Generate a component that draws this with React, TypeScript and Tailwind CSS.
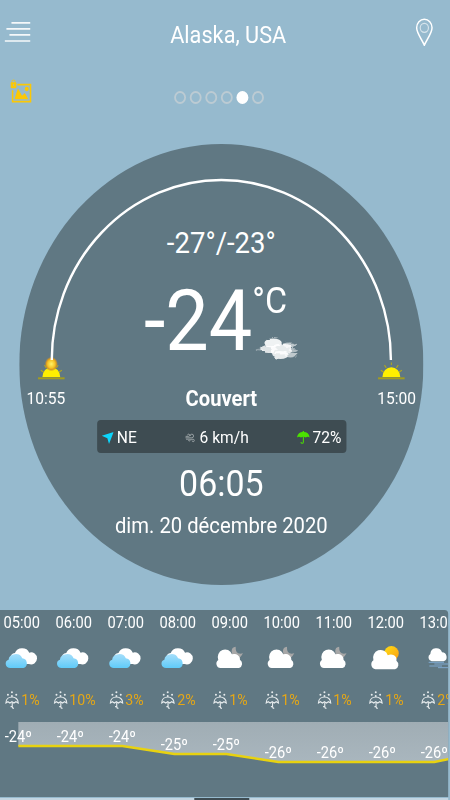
import React from 'react';

type Sky = 'cloudy' | 'night' | 'day' | 'fog';

interface Hour {
  time: string;
  sky: Sky;
  rain: string;
  temp: number;
}

const hours: Hour[] = [
  { time: '05:00', sky: 'cloudy', rain: '1%', temp: -24 },
  { time: '06:00', sky: 'cloudy', rain: '10%', temp: -24 },
  { time: '07:00', sky: 'cloudy', rain: '3%', temp: -24 },
  { time: '08:00', sky: 'cloudy', rain: '2%', temp: -25 },
  { time: '09:00', sky: 'night', rain: '1%', temp: -25 },
  { time: '10:00', sky: 'night', rain: '1%', temp: -26 },
  { time: '11:00', sky: 'night', rain: '1%', temp: -26 },
  { time: '12:00', sky: 'day', rain: '1%', temp: -26 },
  { time: '13:00', sky: 'fog', rain: '2%', temp: -26 },
];

const COLUMN = 56.75;

// y of the curve inside the chart area
const curveY = (temp: number) => 24 + (-24 - temp) * 8;

function MenuIcon() {
  return (
    <svg className="h-[22px] w-[29px]" viewBox="0 0 29 22" stroke="#fff" strokeWidth="1.7">
      <path d="M7.5 1.8H28M2 7.8H28M5.3 13.8H28M0 20H28" opacity=".9" />
    </svg>
  );
}

function PinIcon() {
  return (
    <svg className="h-7 w-5" viewBox="0 0 20 28" fill="none" stroke="#fff">
      <path d="M10 27.3C8.5 23 1.6 15.5 1.6 9.8a8.4 8.6 0 0 1 16.8 0C18.4 15.5 11.5 23 10 27.3Z" strokeWidth="1.6" />
      <circle cx="10" cy="9.8" r="4.5" strokeWidth="1.3" opacity=".6" />
    </svg>
  );
}

function GalleryIcon() {
  return (
    <svg className="h-6 w-6" viewBox="28 238 70 72" preserveAspectRatio="none" fill="#fbc806">
      <path d="M51 255H93V306H36V272" fill="none" stroke="#fbc806" strokeWidth="5" />
      <path d="M42 299 53 266 66 288 75 280 86 299Z" />
      <circle cx="81" cy="268" r="6.5" />
      <rect x="30" y="248" width="18" height="18" rx="3" />
      <path d="M34 249V246a5 5 0 0 1 10 0V249" fill="none" stroke="#fbc806" strokeWidth="2.5" />
      <circle cx="39" cy="256" r="2" fill="#96bace" />
    </svg>
  );
}

function SunIcon({ glow }: { glow?: boolean }) {
  return (
    <svg className="h-[22px] w-[30px] overflow-visible" viewBox="0 0 30 22">
      <path d="M3.5 12.2 6.5 14M7.5 7.2 9.5 9.8M15 4.5V7M22.5 7.2 20.5 9.8M26.5 12.2 23.5 14" stroke="#b5a91c" strokeWidth="1.1" />
      <path d="M5.3 19a9.7 9.8 0 0 1 19.4 0Z" fill="#ffef00" />
      <path d="M.5 20.3H29.5" stroke="#a39d20" strokeWidth="2" />
      {glow && (
        <>
          <defs>
            <radialGradient id="glow">
              <stop offset="0" stopColor="#fff36a" />
              <stop offset=".55" stopColor="#f5c425" />
              <stop offset=".75" stopColor="#d99a22" />
              <stop offset="1" stopColor="#b98a35" stopOpacity="0" />
            </radialGradient>
          </defs>
          <circle cx="15" cy="6" r="7.3" fill="url(#glow)" />
        </>
      )}
    </svg>
  );
}

function WispyCloud() {
  return (
    <svg className="ml-[3px] h-[26px] w-[46px] overflow-visible" viewBox="0 0 46 26">
      <defs>
        <filter id="wisp" x="-20%" y="-20%" width="140%" height="140%">
          <feTurbulence type="fractalNoise" baseFrequency=".1 .25" numOctaves="2" seed="4" />
          <feDisplacementMap in="SourceGraphic" scale="4" xChannelSelector="R" yChannelSelector="G" />
          <feGaussianBlur stdDeviation=".7" />
        </filter>
      </defs>
      <g fill="#fff" filter="url(#wisp)">
        <ellipse cx="20" cy="8" rx="9.5" ry="4.5" opacity=".9" />
        <ellipse cx="15" cy="14" rx="9" ry="4" opacity=".8" />
        <ellipse cx="29" cy="14" rx="12" ry="5.5" opacity=".85" />
        <ellipse cx="28" cy="20" rx="9" ry="4" opacity=".85" />
        <ellipse cx="38" cy="10" rx="7" ry="2.4" opacity=".6" />
        <ellipse cx="39" cy="20" rx="6.5" ry="2.5" opacity=".6" />
        <ellipse cx="42" cy="15" rx="5" ry="2" opacity=".5" />
        <ellipse cx="6" cy="15" rx="5" ry="1.5" opacity=".3" />
      </g>
    </svg>
  );
}

function ArrowIcon() {
  return (
    <svg className="h-3 w-[13px]" viewBox="0 0 36 35" preserveAspectRatio="none" fill="#0cd5fb">
      <path d="M36 0 22 35 17 18 0 11Z" />
    </svg>
  );
}

function WindIcon() {
  return (
    <svg className="h-[10px] w-[11px]" viewBox="0 0 12 10" fill="none" stroke="#a3abae" strokeWidth="1">
      <path d="M.5 3.2H4.2a1.2 1.2 0 1 0-1.2-1.2M.3 4.8H8a2 2 0 1 0-2-2M1 6.3H5a1 1 0 1 1-1 1M6 6.4H9.6a1.3 1.3 0 1 1-1.3 1.4" />
    </svg>
  );
}

function UmbrellaIcon() {
  return (
    <svg className="h-[13px] w-[14px]" viewBox="0 0 38 38" preserveAspectRatio="none">
      <path d="M0 19C2 8 9 3 17 3V0H21V3C29 3 36 8 38 19Q32 14 26 19 19 14 12 19 6 14 0 19Z" fill="#4be000" />
      <path d="M19 16V32q0 4-3.5 4T12 32" fill="none" stroke="#4be000" strokeWidth="3" />
    </svg>
  );
}

function RainIcon() {
  return (
    <svg className="h-[18px] w-4" viewBox="16 271 44 54" preserveAspectRatio="none" fill="none" stroke="#e6ebed" strokeWidth="3.4">
      <path d="M20 307C20 283 57 283 57 307L50 303 44 307 38 303 32 307 26 303Z" />
      <path d="M39 305V318q0 5 5 5M39 318H34" />
      <g fill="#e6ebed" stroke="none">
        <circle cx="38" cy="275" r="3" />
        <circle cx="26" cy="282" r="3" />
        <circle cx="51" cy="282" r="3" />
        <circle cx="38" cy="286" r="2.8" />
      </g>
    </svg>
  );
}

function SkyIcon({ sky }: { sky: Sky }) {
  return (
    <svg className="h-[26px] w-9" viewBox="0 0 99 78" preserveAspectRatio="none">
      <defs>
        <linearGradient id="blue" x1="0" y1="0" x2="0" y2="1">
          <stop offset="0" stopColor="#a5defa" />
          <stop offset="1" stopColor="#5fcbf9" />
        </linearGradient>
        <linearGradient id="sun" x1="0" y1="0" x2="1" y2="1">
          <stop offset="0" stopColor="#ffdf15" />
          <stop offset="1" stopColor="#fb9d12" />
        </linearGradient>
      </defs>
      {sky === 'cloudy' && (
        <>
          <path d="M18 38a14 14 0 0 1 13-17 23 21 0 0 1 43-1 18 18 0 1 1-1 34H40Z" fill="#fff" />
          <path d="M17 66a14 13 0 0 1-5-25 21 18 0 0 1 41-4 15 15 0 0 1 4 29Z" fill="url(#blue)" />
        </>
      )}
      {sky === 'night' && (
        <>
          <path d="M69 2Q57 3 57 16L60 34 80 36Q87 30 91 22 68 28 69 2Z" fill="#a7a7a7" />
          <path d="M24 66a12 13 0 0 1-7-24 21 22 0 0 1 41-17 18 16 0 0 1 24 16 14 14 0 0 1-3 25Z" fill="#fff" />
        </>
      )}
      {sky === 'day' && (
        <>
          <circle cx="69" cy="22" r="22" fill="url(#sun)" />
          <path d="M21 70a15 15 0 0 1-6-27 22 23 0 0 1 43-15 17 16 0 0 1 26 16 15 15 0 0 1-4 26Z" fill="#fff" />
        </>
      )}
      {sky === 'fog' && (
        <>
          <path d="M33 46a12 12 0 0 1-4-22 18 18 0 0 1 35-5 14 14 0 0 1 5 27Z" fill="#fff" />
          <path d="M24 49H70M41 54H90M26 60H64M52 65H90" stroke="#7ea9cf" strokeWidth="3" />
        </>
      )}
    </svg>
  );
}

function Header() {
  return (
    <header className="h-[144px]">
      <div className="flex items-start justify-between pr-[18px] pl-[5px] pt-[18px]">
        <div className="w-10 pt-[3px]">
          <MenuIcon />
        </div>
        <h1 className="pl-[20px] pt-px text-[23.7px] leading-8">Alaska, USA</h1>
        <div className="flex w-10 justify-end">
          <PinIcon />
        </div>
      </div>
      <div className="flex pl-[11px] pt-[28px]">
        <GalleryIcon />
        <div className="flex gap-1 pl-[154.5px] pt-3">
          {[0, 1, 2, 3, 4, 5].map((page) => (
            <span
              key={page}
              className={
                page === 4
                  ? 'size-[13px] rounded-full bg-white'
                  : 'size-[13px] rounded-full border-2 border-[#bccbd3]'
              }
            />
          ))}
        </div>
      </div>
    </header>
  );
}

function CurrentWeather() {
  return (
    <section className="relative ml-[21px] flex size-[441px] flex-col items-center rounded-full bg-[#607883] pt-[80px]">
      <svg className="absolute inset-0 size-full" viewBox="0 0 441 441" fill="none">
        <path d="M35.5 216A185 180 0 0 1 405.5 216" stroke="#fff" strokeWidth="2.6" />
      </svg>
      <div className="h-[38px] text-[30px] leading-[38px]">-27°/-23°</div>
      <div className="flex h-[98px] items-end self-start pl-[136px]">
        <div className="text-[84.5px] leading-[77px]">-24</div>
        <div className="flex h-[99px] translate-y-px flex-col justify-between pt-5">
          <span className="text-[37px] leading-[37px]">°C</span>
          <WispyCloud />
        </div>
      </div>
      <div className="-mt-0.5 flex w-full items-end justify-between px-2 text-[17px] leading-5">
        <div className="flex flex-col items-center gap-2">
          <span className="pl-3">
            <SunIcon glow />
          </span>
          10:55
        </div>
        <div className="text-[22px] font-bold leading-[18px]">Couvert</div>
        <div className="flex flex-col items-center gap-2">
          <span className="pr-3">
            <SunIcon />
          </span>
          15:00
        </div>
      </div>
      <div className="mt-3 flex h-[33px] w-[272px] items-center justify-between rounded bg-[#3e4c52] px-[5px] pt-0.5 text-[17px]">
        <span className="flex items-center gap-1">
          <ArrowIcon />
          NE
        </span>
        <span className="flex items-center gap-[5px]">
          <WindIcon />
          6 km/h
        </span>
        <span className="flex items-center gap-[3px]">
          <UmbrellaIcon />
          72%
        </span>
      </div>
      <div className="mt-[11px] text-[37px] leading-10">06:05</div>
      <div className="mt-[6px] text-[22.1px] leading-[30px]">dim. 20 décembre 2020</div>
    </section>
  );
}

function HourlyForecast() {
  const points = hours.map((h, i) => `${i * COLUMN},${curveY(h.temp)}`).join(' ');

  return (
    <section className="mt-[25px] h-[187px] w-[489px] overflow-hidden rounded-tr bg-[#607883]">
      <div className="flex w-[520px]">
        {hours.map((h) => (
          <div key={h.time} className="-ml-[4.7px] mr-[4.7px] flex w-[56.75px] shrink-0 flex-col items-center">
            <span className="mt-[3px] text-[16px] leading-5">{h.time}</span>
            <span className="mt-[13px] pr-0.5">
              <SkyIcon sky={h.sky} />
            </span>
            <span className="mt-[18px] flex items-center gap-0.5 pl-px text-[15.5px] leading-5 text-[#e5a716]">
              <RainIcon />
              {h.rain}
            </span>
          </div>
        ))}
      </div>
      <svg className="mt-[12px] ml-5 h-[60px] w-[480px] overflow-visible" viewBox="0 0 480 60">
        <defs>
          <linearGradient id="area" x1="0" y1="0" x2="0" y2="1">
            <stop offset="0" stopColor="#a0adb4" />
            <stop offset="1" stopColor="#a9b6be" />
          </linearGradient>
        </defs>
        <polygon points={`0,0 ${points} 470,37 470,0`} fill="url(#area)" />
        <polyline points={`${points} 470,37`} fill="none" stroke="#e8d210" strokeWidth="2.6" />
        {hours.map((h, i) => (
          <text key={h.time} x={i * COLUMN} y={curveY(h.temp) - 4} fill="#fff" fontSize="16" textAnchor="middle">
            {h.temp}º
          </text>
        ))}
      </svg>
    </section>
  );
}

export default function App() {
  return (
    <div className="h-[800px] w-[450px] overflow-hidden bg-[#96bace]">
      <div className="flex h-[800px] w-[491px] origin-top-left scale-x-[0.9165] flex-col font-['Roboto',sans-serif] text-white">
        <Header />
        <CurrentWeather />
        <HourlyForecast />
        <div className="mt-px flex h-[2px] w-[489px] bg-[#c3d6e2] pl-[212px]">
          <div className="w-[60px] bg-[#3e4c52]" />
        </div>
      </div>
    </div>
  );
}
